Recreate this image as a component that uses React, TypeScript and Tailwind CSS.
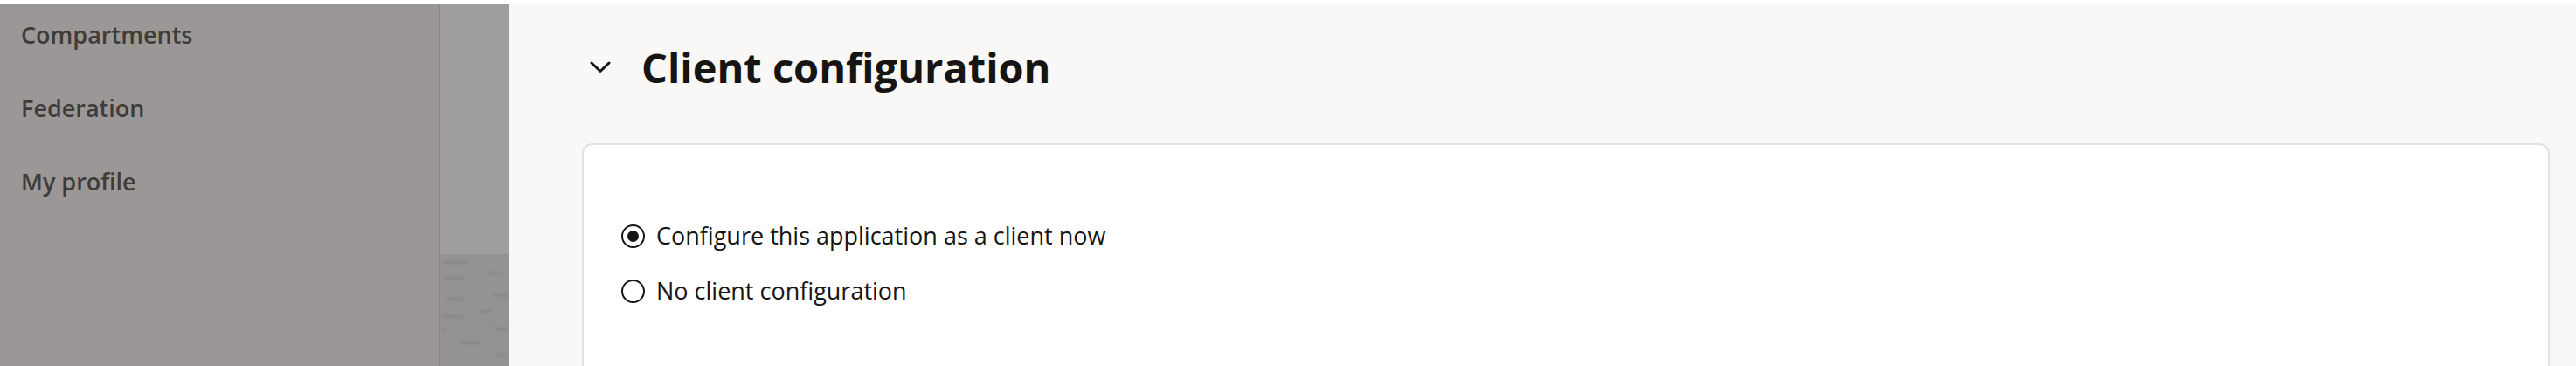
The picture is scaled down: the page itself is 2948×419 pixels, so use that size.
import React from "react";

const NAV = ["Compartments", "Federation", "My profile"];

const OPTIONS = [
  { label: "Configure this application as a client now", checked: true },
  { label: "No client configuration", checked: false },
];

// blurred table marks that show through the dimmed backdrop
const MARKS = [
  { top: 8, left: 2, w: 30 },
  { top: 20, left: 56, w: 14 },
  { top: 26, left: 4, w: 22 },
  { top: 46, left: 60, w: 18 },
  { top: 50, left: 6, w: 20 },
  { top: 64, left: 44, w: 14 },
  { top: 70, left: 2, w: 24 },
  { top: 84, left: 62, w: 16 },
  { top: 86, left: 0, w: 6 },
  { top: 100, left: 22, w: 26 },
  { top: 114, left: 64, w: 12 },
];

function Radio({ checked }: { checked: boolean }) {
  return (
    <span className="w-[27px] h-[27px] shrink-0 rounded-full border-[2.5px] border-[#161513] bg-white flex items-center justify-center">
      {checked && <span className="w-[13px] h-[13px] rounded-full bg-[#161513]" />}
    </span>
  );
}

export default function App() {
  return (
    <div className="w-[2948px] h-[419px] overflow-hidden bg-white pt-[5px] flex font-['Open_Sans',sans-serif]">
      {/* Side navigation (dimmed by overlay) */}
      <aside className="w-[504px] shrink-0 bg-[#9b9796] border-r-2 border-[#8a8786] pl-[24px] pt-[19px] flex flex-col gap-[52px]">
        {NAV.map((n) => (
          <p key={n} className="text-[27px] leading-[32px] font-semibold text-[#3e3c3b]">
            {n}
          </p>
        ))}
      </aside>

      {/* Backdrop page sliver */}
      <div className="w-[78px] shrink-0 flex flex-col">
        <div className="h-[286px] bg-[#a09e9d]" />
        <div className="flex-1 bg-[#959392] relative overflow-hidden">
          {MARKS.map((m, i) => (
            <span
              key={i}
              className="absolute h-[3px] rounded-full bg-[#888685] blur-[1.5px]"
              style={{ top: m.top, left: m.left, width: m.w }}
            />
          ))}
        </div>
      </div>

      {/* Main content */}
      <main className="flex-1 bg-[#f9f8f6] pl-[84px] pr-[30px] pt-[48px]">
        <div className="h-[48px] flex items-center">
          <svg width="24" height="14" viewBox="0 0 24 14" className="ml-[9px] shrink-0" fill="none">
            <polyline
              points="2,2 12,11.5 22,2"
              stroke="#161513"
              strokeWidth="3"
              strokeLinecap="round"
              strokeLinejoin="round"
            />
          </svg>
          <h2 className="ml-[35px] text-[47px] leading-[48px] font-bold text-[#161513]">
            Client configuration
          </h2>
        </div>

        <section className="mt-[63px] h-[400px] rounded-[12px] border-2 border-[#e4e2df] bg-white pt-[86px] pl-[43px]">
          <div className="flex flex-col gap-[27px]">
            {OPTIONS.map((o) => (
              <label key={o.label} className="h-[36px] flex items-center gap-[13px]">
                <Radio checked={o.checked} />
                <span className="text-[27px] leading-[36px] text-[#161513]">{o.label}</span>
              </label>
            ))}
          </div>
        </section>
      </main>
    </div>
  );
}
